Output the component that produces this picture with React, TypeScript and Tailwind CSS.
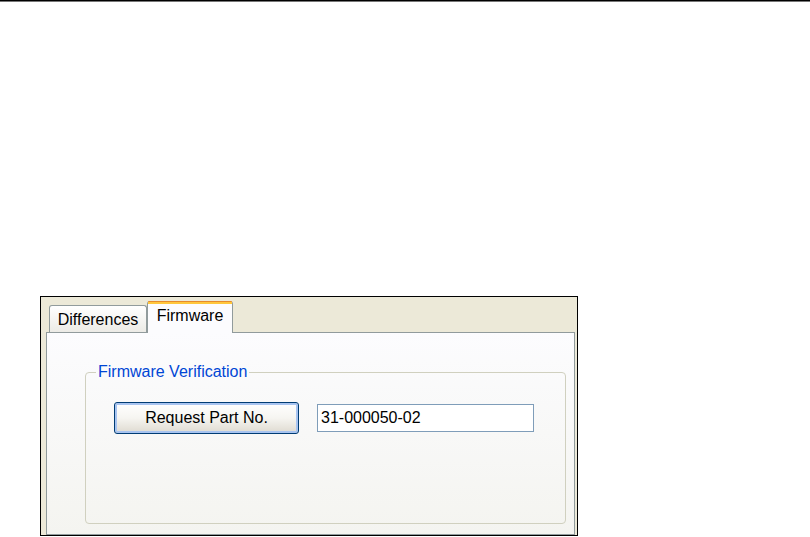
import React from "react";

export default function App() {
  const font = { fontFamily: '"Liberation Sans", Arial, sans-serif' };
  return (
    <div className="w-[810px] h-[537px] bg-white overflow-hidden" style={font}>
      <div className="h-[1px] bg-black" />
      <div className="h-[1px] bg-[#777]" />
      <div className="pl-[40px] pt-[294px]">
        <div className="w-[538px] h-[240px] border border-black bg-[#ECE9D8] flex flex-col">
          {/* tab strip */}
          <div className="relative z-10 flex items-end h-[36px] -mb-[1px] pl-[8px] pt-[4px]">
            <div className="mb-[1px] h-[27px] w-[98px] border border-b-0 border-[#919B9C] rounded-t-[3px] bg-gradient-to-b from-white to-[#ECEBE6] flex justify-center pt-[5px] text-[16px] leading-[18px] text-black">
              Differences
            </div>
            <div className="h-[32px] w-[86px] border-x border-[#919B9C] rounded-t-[3px] bg-[#FCFCFE] flex flex-col">
              <div className="h-[1px] bg-[#E68B2C] rounded-t-[3px]" />
              <div className="h-[2px] bg-[#FFC73C]" />
              <div className="flex justify-center pt-[3px] text-[16px] leading-[18px] text-black">
                Firmware
              </div>
            </div>
          </div>
          {/* panel */}
          <div className="flex-1 ml-[5px] mr-[2px] border border-[#919B9C] bg-gradient-to-b from-[#FCFCFE] to-[#F4F4F0] pl-[38px] pt-[30px]">
            <fieldset className="w-[481px] h-[161px] border border-[#D0D0BF] rounded-[4px] px-[10px] m-0">
              <legend className="px-[2px] text-[16px] leading-[18px] text-[#0046D5]">
                Firmware Verification
              </legend>
              <div className="flex items-center pl-[18px] pt-[21px] gap-[18px]">
                <button className="w-[185px] h-[32px] rounded-[3px] border border-[#003C74] bg-gradient-to-b from-white via-[#F6F5F1] to-[#DEDAD0] shadow-[inset_0_0_0_2px_#A8C4F0] text-[16px] leading-[18px] text-black">
                  Request Part No.
                </button>
                <div className="w-[217px] h-[28px] border border-[#7F9DB9] bg-white flex items-center pl-[3px] text-[16px] leading-[18px] text-black">
                  31-000050-02
                </div>
              </div>
            </fieldset>
          </div>
        </div>
      </div>
    </div>
  );
}
